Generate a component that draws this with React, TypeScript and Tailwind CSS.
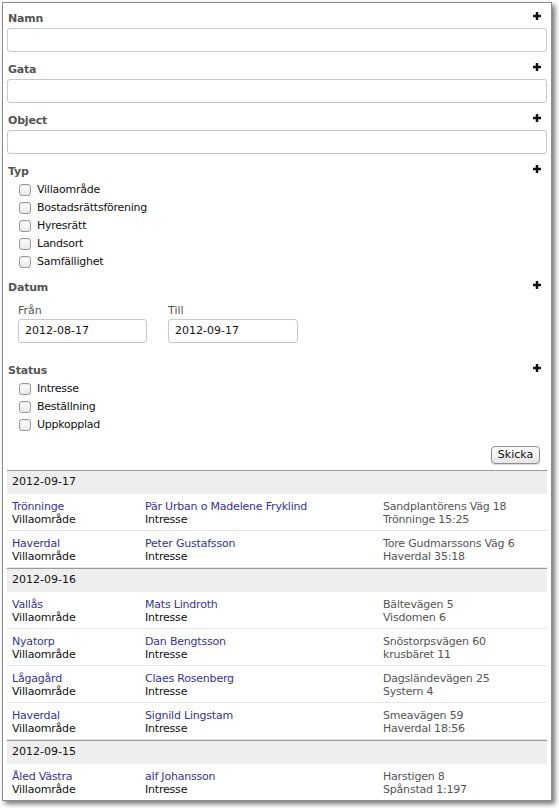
import React from "react";

const font = { fontFamily: '"DejaVu Sans", "Liberation Sans", sans-serif' };

function Plus() {
  return (
    <svg width="8" height="8" viewBox="0 0 8 8" className="block">
      <rect x="2.75" y="0" width="2.5" height="8" fill="#111" />
      <rect x="0" y="2.75" width="8" height="2.5" fill="#111" />
    </svg>
  );
}

function Label({ text }: { text: string }) {
  return (
    <div className="flex items-start justify-between h-[16px] pl-[1px] pr-[6px]">
      <span className="pt-[2px] text-[11px] font-bold text-[#555] leading-[14px] tracking-[-0.2px]">{text}</span>
      <span className="pt-[2px]">
        <Plus />
      </span>
    </div>
  );
}

function TextField({ text }: { text: string }) {
  return (
    <div className="mb-[9px]">
      <Label text={text} />
      <div className="mt-[2px] h-[24px] rounded-[3px] border border-[#c8c8c8] bg-white" />
    </div>
  );
}

function Check({ text }: { text: string }) {
  return (
    <div className="flex items-center h-[18px] pl-[12px]">
      <span className="w-[12px] h-[12px] rounded-[3px] border border-[#9a9a9a] bg-gradient-to-b from-[#ffffff] to-[#e8e8e8] shadow-[inset_0_1px_1px_rgba(0,0,0,0.08)]" />
      <span className="ml-[6px] text-[11px] text-[#111] leading-[14px] tracking-[-0.25px]">{text}</span>
    </div>
  );
}

type Row = { place: string; name: string; addr: string; sub: string };
type Group = { date: string; rows: Row[] };

const groups: Group[] = [
  {
    date: "2012-09-17",
    rows: [
      { place: "Trönninge", name: "Pär Urban o Madelene Fryklind", addr: "Sandplantörens Väg 18", sub: "Trönninge 15:25" },
      { place: "Haverdal", name: "Peter Gustafsson", addr: "Tore Gudmarssons Väg 6", sub: "Haverdal 35:18" },
    ],
  },
  {
    date: "2012-09-16",
    rows: [
      { place: "Vallås", name: "Mats Lindroth", addr: "Bältevägen 5", sub: "Visdomen 6" },
      { place: "Nyatorp", name: "Dan Bengtsson", addr: "Snöstorpsvägen 60", sub: "krusbäret 11" },
      { place: "Lågagård", name: "Claes Rosenberg", addr: "Dagsländevägen 25", sub: "Systern 4" },
      { place: "Haverdal", name: "Signild Lingstam", addr: "Smeavägen 59", sub: "Haverdal 18:56" },
    ],
  },
  {
    date: "2012-09-15",
    rows: [{ place: "Åled Västra", name: "alf Johansson", addr: "Harstigen 8", sub: "Spånstad 1:197" }],
  },
];

export default function App() {
  return (
    <div className="w-[559px] h-[808px] bg-white pt-[2px] pl-[2px]" style={font}>
      <div className="w-[550px] h-[799px] border border-[#8c8c8c] bg-white shadow-[3px_3px_5px_rgba(0,0,0,0.55)] overflow-hidden">
        <div className="pt-[7px] px-[4px]">
          <TextField text="Namn" />
          <TextField text="Gata" />
          <TextField text="Object" />

          <Label text="Typ" />
          <div className="mt-[2px] mb-[8px]">
            <Check text="Villaområde" />
            <Check text="Bostadsrättsförening" />
            <Check text="Hyresrätt" />
            <Check text="Landsort" />
            <Check text="Samfällighet" />
          </div>

          <Label text="Datum" />
          <div className="flex mt-[8px] pl-[11px] gap-[21px] mb-[19px]">
            <div className="w-[129px]">
              <div className="text-[11px] text-[#555] leading-[16px]">Från</div>
              <div className="h-[24px] rounded-[3px] border border-[#c8c8c8] flex items-center pl-[6px] text-[11px] text-[#111]">2012-08-17</div>
            </div>
            <div className="w-[130px]">
              <div className="text-[11px] text-[#555] leading-[16px]">Till</div>
              <div className="h-[24px] rounded-[3px] border border-[#c8c8c8] flex items-center pl-[6px] text-[11px] text-[#111]">2012-09-17</div>
            </div>
          </div>

          <Label text="Status" />
          <div className="mt-[2px]">
            <Check text="Intresse" />
            <Check text="Beställning" />
            <Check text="Uppkopplad" />
          </div>

          <div className="flex justify-end mt-[12px] pr-[7px]">
            <button className="h-[18px] w-[49px] rounded-[4px] border border-[#8e8e8e] bg-gradient-to-b from-[#ffffff] to-[#e6e6e6] text-[11px] text-[#111] leading-[16px] shadow-[0_1px_1px_rgba(0,0,0,0.15)]">
              Skicka
            </button>
          </div>

          <div className="mt-[6px]">
            {groups.map((g) => (
              <div key={g.date}>
                <div className="h-[24px] border-t border-[#9a9a9a] bg-[#eeeeee] flex items-center pl-[5px] text-[11px] text-[#111]">
                  {g.date}
                </div>
                {g.rows.map((r, i) => (
                  <div key={i} className="grid grid-cols-[138px_238px_1fr] h-[37px] border-b border-[#e6e6e6] pt-[6px] text-[11px] leading-[13px] tracking-[-0.2px]">
                    <div className="pl-[5px]">
                      <div className="text-[#35358e]">{r.place}</div>
                      <div className="text-[#111]">Villaområde</div>
                    </div>
                    <div>
                      <div className="text-[#35358e]">{r.name}</div>
                      <div className="text-[#111]">Intresse</div>
                    </div>
                    <div className="text-[#555]">
                      <div>{r.addr}</div>
                      <div>{r.sub}</div>
                    </div>
                  </div>
                ))}
              </div>
            ))}
          </div>
        </div>
      </div>
    </div>
  );
}
